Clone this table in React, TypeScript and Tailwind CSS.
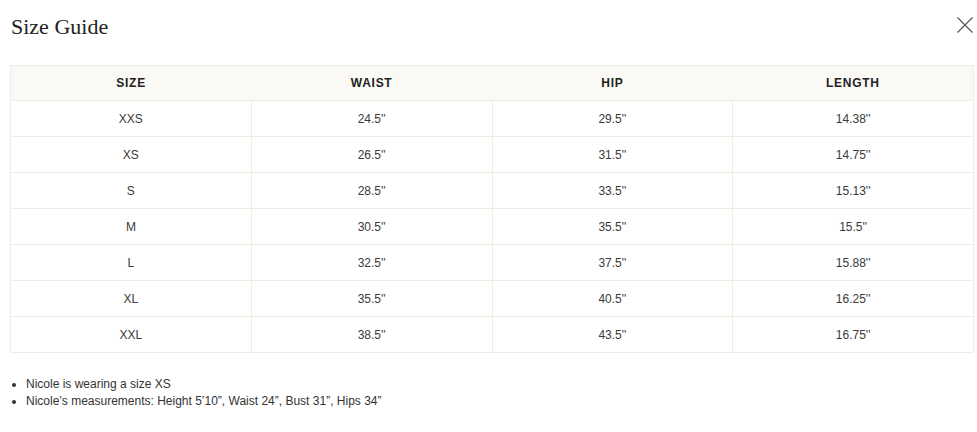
const rows = [
  ["XXS", "24.5''", "29.5''", "14.38''"],
  ["XS", "26.5''", "31.5''", "14.75''"],
  ["S", "28.5''", "33.5''", "15.13''"],
  ["M", "30.5''", "35.5''", "15.5''"],
  ["L", "32.5''", "37.5''", "15.88''"],
  ["XL", "35.5''", "40.5''", "16.25''"],
  ["XXL", "38.5''", "43.5''", "16.75''"],
];

const headers = ["SIZE", "WAIST", "HIP", "LENGTH"];

export default function App() {
  return (
    <div className="w-[977px] h-[432px] bg-white font-['Liberation_Sans',Arial,sans-serif] text-[#333]">
      <div className="flex items-start justify-between pl-[11px] pr-[3px] pt-[12px]">
        <h2 className="font-['Liberation_Serif',serif] text-[22px] leading-[30px] text-[#222]">
          Size Guide
        </h2>
        <button className="mt-[4px] text-[#555]">
          <svg width="18" height="18" viewBox="0 0 18 18" fill="none" stroke="currentColor" strokeWidth="1.2">
            <path d="M1.5 1.5 L16.5 16.5 M16.5 1.5 L1.5 16.5" />
          </svg>
        </button>
      </div>

      <table className="ml-[10px] mt-[23px] w-[964px] border-collapse border border-[#efede2] table-fixed">
        <thead>
          <tr className="bg-[#faf9f5] h-[35px]">
            {headers.map((h) => (
              <th
                key={h}
                className="text-[12px] font-semibold tracking-[0.06em] text-[#222] text-center align-middle"
              >
                {h}
              </th>
            ))}
          </tr>
        </thead>
        <tbody>
          {rows.map((r) => (
            <tr key={r[0]} className="h-[36px]">
              {r.map((c, i) => (
                <td
                  key={i}
                  className="border border-[#efede2] text-[12px] text-center align-middle text-[#3a3a3a]"
                >
                  {c}
                </td>
              ))}
            </tr>
          ))}
        </tbody>
      </table>

      <ul className="mt-[23px] pl-[26px] list-disc text-[12px] leading-[17px] text-[#333]">
        <li>Nicole is wearing a size XS</li>
        <li>Nicole’s measurements: Height 5’10”, Waist 24”, Bust 31”, Hips 34”</li>
      </ul>
    </div>
  );
}
